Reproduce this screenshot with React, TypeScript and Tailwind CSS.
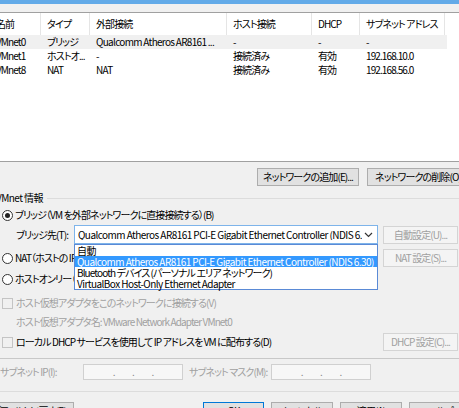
import React from "react";

const K = "tracking-[-0.9px]";

const cols = [
  { label: "名前", w: "w-[51px]" },
  { label: "タイプ", w: "w-[49px]" },
  { label: "外部接続", w: "w-[137px]" },
  { label: "ホスト接続", w: "w-[85px]" },
  { label: "DHCP", w: "w-[48px]" },
  { label: "サブネット アドレス", w: "w-[85px]" },
];

const rows = [
  { cells: ["VMnet0", "ブリッジ", "Qualcomm Atheros AR8161 ...", "-", "-", "-"], selected: true },
  { cells: ["VMnet1", "ホストオ...", "-", "接続済み", "有効", "192.168.10.0"], selected: false },
  { cells: ["VMnet8", "NAT", "NAT", "接続済み", "有効", "192.168.56.0"], selected: false },
];

const Radio = ({ checked }: { checked?: boolean }) => (
  <span className="w-[11px] h-[11px] rounded-full border border-[#333] bg-white flex items-center justify-center shrink-0">
    {checked && <span className="w-[5px] h-[5px] rounded-full bg-[#222]" />}
  </span>
);

const Check = () => (
  <span className="w-[11px] h-[11px] border border-[#c4c4c4] bg-[#f0f0f0] shrink-0" />
);

const Btn = ({ children, w, disabled, primary }: { children: React.ReactNode; w: string; disabled?: boolean; primary?: boolean }) => (
  <div
    className={`${w} h-[18px] shrink-0 flex items-center justify-center border whitespace-nowrap overflow-hidden ${K} ${
      disabled
        ? "border-[#d4d4d4] bg-[#f4f4f4] text-[#a0a0a0]"
        : primary
        ? "border-[#0078d7] bg-[#e1e1e1] text-black"
        : "border-[#adadad] bg-[#e1e1e1] text-black"
    }`}
  >
    {children}
  </div>
);

const App: React.FC = () => {
  return (
    <div className="w-[459px] h-[408px] overflow-hidden bg-[#f0f0f0] text-[10px] leading-none tracking-[-0.55px] text-black font-['Noto_Sans_CJK_JP',sans-serif] [font-feature-settings:'palt']">
      <div className="h-[4px] bg-[#62aae8]" />
      <div className="ml-[-10px] w-[480px]">
        <div className="h-[8px]" />
        {/* list */}
        <div className="h-[150px] bg-white border-y border-[#a0a0a0]">
          <div className="flex h-[22px]">
            {cols.map((c) => (
              <div key={c.label} className={`${c.w} shrink-0 pl-[6px] flex items-center border-r border-[#e5e5e5] whitespace-nowrap ${K}`}>
                {c.label}
              </div>
            ))}
          </div>
          {rows.map((r) => (
            <div key={r.cells[0]} className={`flex h-[14px] w-[457px] ${r.selected ? "bg-[#f0f0f0]" : ""}`}>
              {r.cells.map((cell, i) => (
                <div key={i} className={`${cols[i].w} shrink-0 pl-[6px] flex items-center whitespace-nowrap overflow-hidden ${i === 2 ? "tracking-[-0.7px]" : K}`}>
                  {cell}
                </div>
              ))}
            </div>
          ))}
        </div>

        <div className="flex gap-[8px] pl-[267px] mt-[6px]">
          <Btn w="w-[102px]">ネットワークの追加(E)...</Btn>
          <Btn w="w-[102px]">ネットワークの削除(O)</Btn>
        </div>

        {/* VMnet info */}
        <div className="flex items-center mt-[5px] h-[14px] pl-[6px]">
          <span className="whitespace-nowrap pr-[4px]">VMnet 情報</span>
          <div className="flex-1 h-px bg-[#dcdcdc]" />
        </div>

        <div className={`flex items-center gap-[2px] h-[16px] mt-[2px] pl-[12px] whitespace-nowrap ${K}`}>
          <Radio checked />
          <span>ブリッジ（VM を外部ネットワークに直接接続する）(B)</span>
        </div>

        <div className="relative flex items-center mt-[2px] h-[19px]">
          <span className={`w-[84px] shrink-0 pl-[26px] whitespace-nowrap ${K}`}>ブリッジ先(T):</span>
          <div className="w-[304px] shrink-0 h-[19px] border border-[#7eb4ea] bg-white flex items-center pl-[3px] pr-[4px] whitespace-nowrap overflow-hidden">
            <span className="flex-1 overflow-hidden">Qualcomm Atheros AR8161 PCI-E Gigabit Ethernet Controller (NDIS 6.</span>
            <svg width="9" height="6" viewBox="0 0 9 6" className="shrink-0 ml-[2px]">
              <path d="M1 1 L4.5 4.5 L8 1" fill="none" stroke="#333" strokeWidth="1.2" />
            </svg>
          </div>
          <div className="ml-[5px]">
            <Btn w="w-[75px]" disabled>自動設定(U)...</Btn>
          </div>
          {/* dropdown popup */}
          <div className="absolute left-[84px] top-[19px] w-[304px] bg-white border border-[#5a8ad6] z-10 whitespace-nowrap">
            <div className="h-[11px] flex items-center pl-[2px]">自動</div>
            <div className="h-[11px] flex items-center pl-[2px] bg-[#3399ff] text-white">Qualcomm Atheros AR8161 PCI-E Gigabit Ethernet Controller (NDIS 6.30)</div>
            <div className={`h-[11px] flex items-center pl-[2px] ${K}`}>Bluetooth デバイス (パーソナル エリア ネットワーク)</div>
            <div className="h-[11px] flex items-center pl-[2px]">VirtualBox Host-Only Ethernet Adapter</div>
          </div>
        </div>

        <div className="flex items-center mt-[5px] h-[18px]">
          <div className={`flex items-center gap-[2px] pl-[12px] w-[393px] shrink-0 whitespace-nowrap ${K}`}>
            <Radio />
            <span>NAT（ホストの IP アドレスを VM と共有する）(N)</span>
          </div>
          <Btn w="w-[75px]" disabled>NAT 設定(S)...</Btn>
        </div>

        <div className={`flex items-center gap-[2px] h-[16px] mt-[4px] pl-[12px] whitespace-nowrap ${K}`}>
          <Radio />
          <span>ホストオンリー（VM をプライベート ネットワーク内で接続する）(H)</span>
        </div>

        <div className={`flex items-center gap-[3px] h-[16px] mt-[8px] pl-[12px] whitespace-nowrap text-[#a0a0a0] ${K}`}>
          <Check />
          <span>ホスト仮想アダプタをこのネットワークに接続する(V)</span>
        </div>

        <div className={`flex items-center h-[14px] mt-[4px] pl-[26px] whitespace-nowrap text-[#a0a0a0] ${K}`}>
          ホスト仮想アダプタ名: VMware Network Adapter VMnet0
        </div>

        <div className="flex items-center mt-[4px] h-[18px]">
          <div className={`flex items-center gap-[3px] pl-[12px] w-[393px] shrink-0 whitespace-nowrap ${K}`}>
            <Check />
            <span>ローカル DHCP サービスを使用して IP アドレスを VM に配布する(D)</span>
          </div>
          <Btn w="w-[75px]" disabled>DHCP 設定(C)...</Btn>
        </div>

        <div className="h-px bg-[#c8c8c8] mt-[7px]" />

        <div className={`flex items-center h-[16px] mt-[5px] text-[#a0a0a0] whitespace-nowrap ${K}`}>
          <span className="w-[93px] shrink-0 pl-[10px]">サブネット IP(I):</span>
          <div className="w-[100px] shrink-0 h-[16px] border border-[#d0d0d0] bg-[#f7f7f7] flex items-center justify-around px-[20px] text-[#888]">
            <span>.</span><span>.</span><span>.</span>
          </div>
          <span className="w-[88px] shrink-0 pl-[6px]">サブネット マスク(M):</span>
          <div className="w-[100px] shrink-0 h-[16px] border border-[#d0d0d0] bg-[#f7f7f7] flex items-center justify-around px-[20px] text-[#888]">
            <span>.</span><span>.</span><span>.</span>
          </div>
        </div>

        <div className="h-px bg-[#dcdcdc] mt-[11px]" />

        <div className="flex items-center mt-[10px] whitespace-nowrap">
          <div className="ml-[-6px]">
            <Btn w="w-[90px]">デフォルトに戻す(R)</Btn>
          </div>
          <div className="ml-[129px] flex gap-[7px]">
            <Btn w="w-[61px]" primary>OK</Btn>
            <Btn w="w-[62px]">キャンセル</Btn>
            <Btn w="w-[62px]">適用(A)</Btn>
            <Btn w="w-[62px]">ヘルプ</Btn>
          </div>
        </div>
      </div>
    </div>
  );
};

export default App;
